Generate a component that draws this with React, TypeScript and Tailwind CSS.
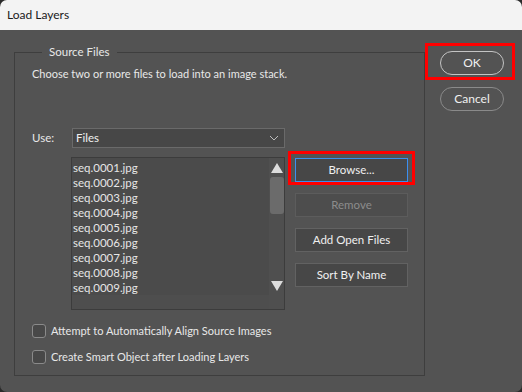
import React from "react";

const files = [
  "seq.0001.jpg",
  "seq.0002.jpg",
  "seq.0003.jpg",
  "seq.0004.jpg",
  "seq.0005.jpg",
  "seq.0006.jpg",
  "seq.0007.jpg",
  "seq.0008.jpg",
  "seq.0009.jpg",
];

function SideButton({
  children,
  disabled,
  focused,
}: {
  children: React.ReactNode;
  disabled?: boolean;
  focused?: boolean;
}) {
  return (
    <div
      className={
        "h-[24px] w-[113px] flex items-center justify-center border text-[11.5px] " +
        (focused
          ? "border-[#3b8ff0] bg-[#474747] text-[#f0f0f0]"
          : disabled
          ? "border-[#5c5c5c] bg-[#4d4d4d] text-[#8c8c8c]"
          : "border-[#626262] bg-[#474747] text-[#f0f0f0]")
      }
    >
      {children}
    </div>
  );
}

function Check({ label }: { label: string }) {
  return (
    <div className="flex items-center h-[14px]">
      <div className="w-[14px] h-[14px] rounded-[3px] border border-[#8a8a8a] bg-[#484848]" />
      <span className="ml-[5px] text-[11px] leading-[16px] text-[#e8e8e8]">{label}</span>
    </div>
  );
}

export default function App() {
  return (
    <div
      className="w-[522px] h-[392px] bg-[#2a2a2a]"
      style={{ fontFamily: 'Lato, "Noto Sans", sans-serif' }}
    >
      <div className="w-[522px] h-[392px] rounded-[7px] overflow-hidden flex flex-col">
        <div className="h-[30px] bg-[#f3f3f3] flex items-center pl-[7px] text-[12px] text-[#1a1a1a]">
          Load Layers
        </div>
        <div className="flex-1 bg-[#535353] flex relative">
          <fieldset className="ml-[14px] mt-[14px] w-[411px] h-[332px] border border-[#3e3e3e] pl-[17px] pr-0">
            <legend className="ml-[10px] px-[7px] text-[11.5px] leading-[16px] text-[#e8e8e8]">
              Source Files
            </legend>
            <div className="mt-[6px] text-[11px] leading-[16px] text-[#e8e8e8]">
              Choose two or more files to load into an image stack.
            </div>
            <div className="mt-[46px] flex items-center h-[20px]">
              <span className="w-[40px] text-[11.5px] text-[#e8e8e8]">Use:</span>
              <div className="w-[213px] h-[20px] border border-[#6a6a6a] bg-[#474747] flex items-center pl-[3px] pr-[4px] text-[11.5px] text-[#f0f0f0]">
                <span className="flex-1">Files</span>
                <svg width="10" height="6" viewBox="0 0 10 6" className="mr-[1px]">
                  <path d="M1 1 L5 5 L9 1" stroke="#bdbdbd" strokeWidth="1" fill="none" />
                </svg>
              </div>
            </div>
            <div className="flex mt-[9px]">
              <div className="ml-[39px] w-[214px] h-[153px] border border-[#3c3c3c] bg-[#4b4b4b] flex flex-col">
                <div className="flex flex-1">
                  <div className="flex-1 pl-[1px] pt-[2px] text-[11.5px] leading-[15px] text-[#e6e6e6]">
                    {files.map((f) => (
                      <div key={f} className="h-[15px]">{f}</div>
                    ))}
                  </div>
                  <div className="w-[15px] bg-[#4f4f4f] flex flex-col items-center">
                    <svg width="12" height="10" viewBox="0 0 12 10" className="mt-[5px]">
                      <path d="M6 0 L12 10 L0 10 Z" fill="#dcdcdc" />
                    </svg>
                    <div className="mt-[4px] w-[14px] h-[37px] rounded-[3px] bg-[#6b6b6b]" />
                    <div className="flex-1" />
                    <svg width="12" height="10" viewBox="0 0 12 10" className="mb-[4px]">
                      <path d="M0 0 L12 0 L6 10 Z" fill="#dcdcdc" />
                    </svg>
                  </div>
                </div>
                <div className="h-[15px] flex">
                  <div className="flex-1 bg-[#4e4e4e]" />
                  <div className="w-[15px] bg-[#4f4f4f]" />
                </div>
              </div>
              <div className="ml-[10px] flex flex-col gap-[11px] pt-[1px]">
                <div className="relative">
                  <SideButton focused>Browse...</SideButton>
                  <div className="absolute left-[-7px] top-[-7px] w-[127px] h-[34px] border-[3px] border-[#ff0000]" />
                </div>
                <SideButton disabled>Remove</SideButton>
                <SideButton>Add Open Files</SideButton>
                <SideButton>Sort By Name</SideButton>
              </div>
            </div>
            <div className="mt-[14px] flex flex-col gap-[12px]">
              <Check label="Attempt to Automatically Align Source Images" />
              <Check label="Create Smart Object after Loading Layers" />
            </div>
          </fieldset>
          <div className="ml-[15px] mt-[21px] flex flex-col gap-[12px]">
            <div className="relative">
              <div className="w-[64px] h-[24px] rounded-full border border-[#c4c4c4] flex items-center justify-center text-[12px] text-[#f0f0f0]">
                OK
              </div>
              <div className="absolute left-[-15px] top-[-8px] w-[90px] h-[37px] border-[3px] border-[#ff0000]" />
            </div>
            <div className="w-[64px] h-[24px] rounded-full border border-[#8a8a8a] flex items-center justify-center text-[12px] text-[#f0f0f0]">
              Cancel
            </div>
          </div>
        </div>
      </div>
    </div>
  );
}
